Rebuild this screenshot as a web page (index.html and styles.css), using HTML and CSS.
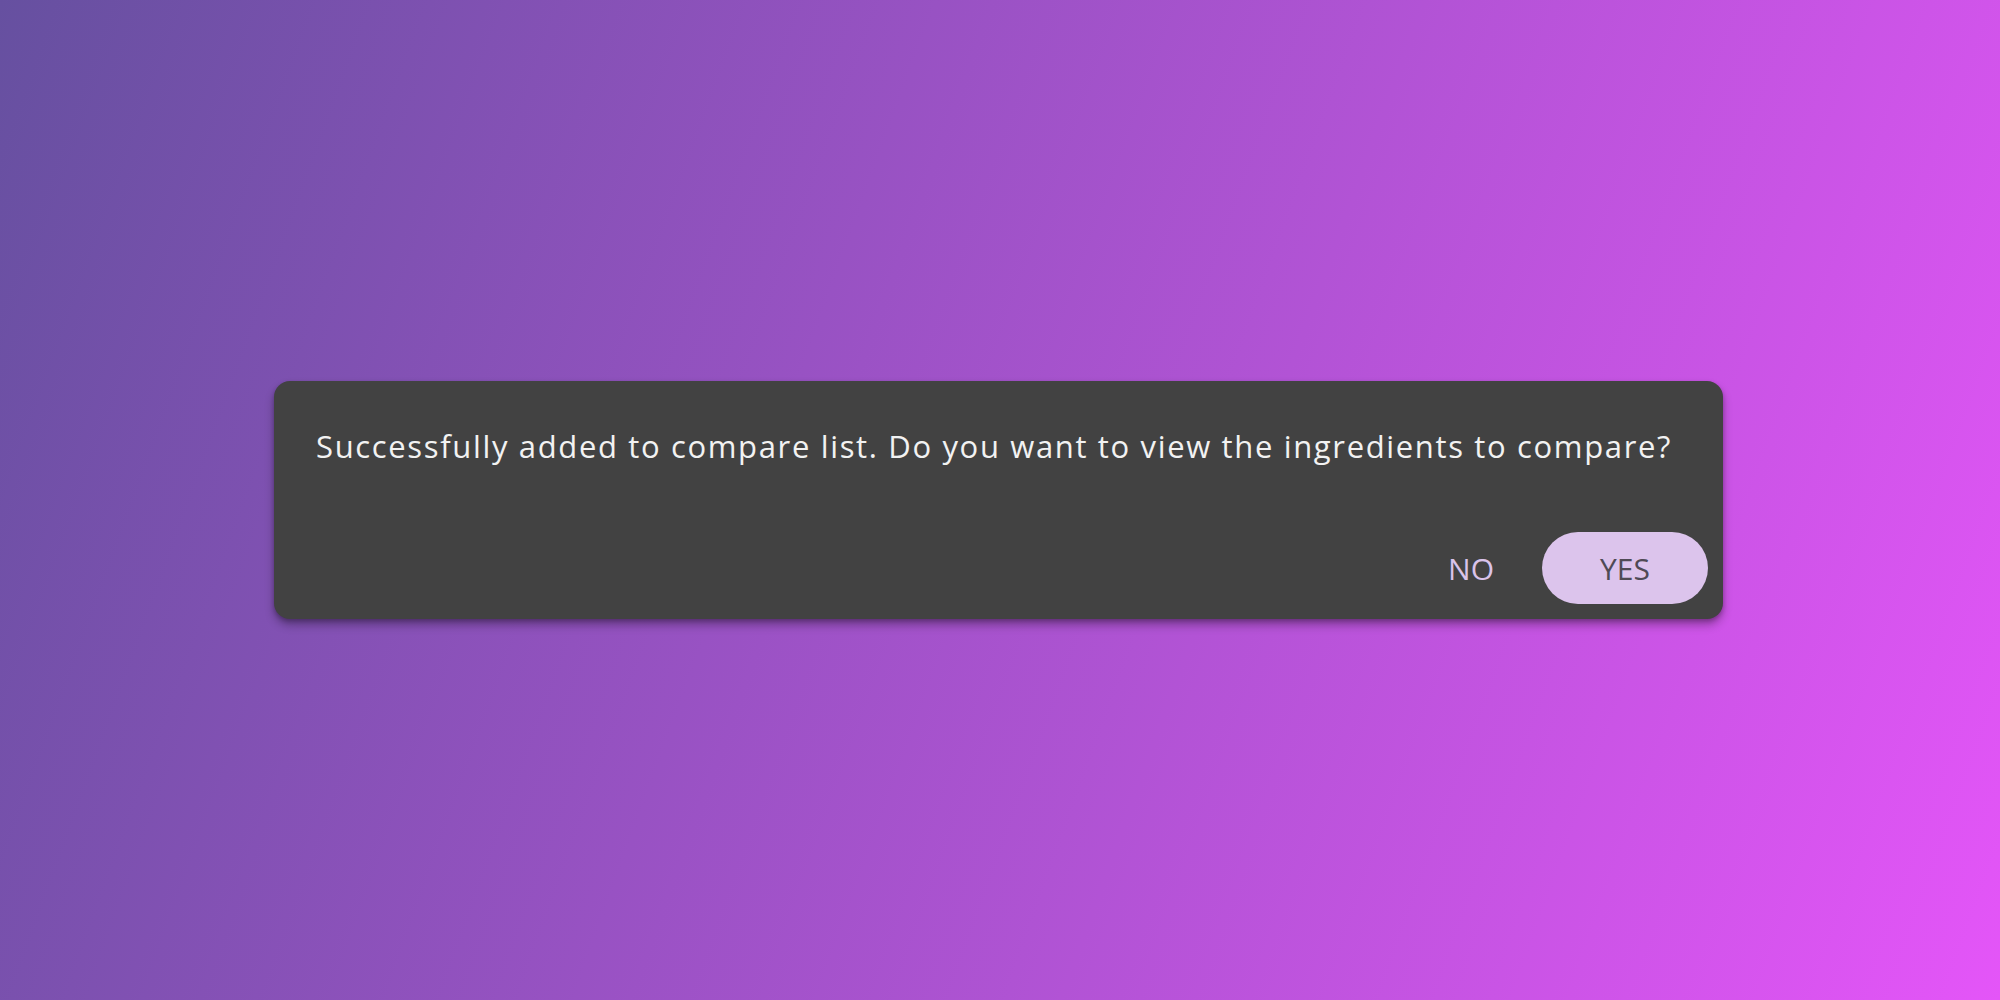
FILE: index.html
```html
<!DOCTYPE html>
<html lang="en">
<head>
<meta charset="utf-8">
<title>Snackbar</title>
<link rel="stylesheet" href="styles.css">
</head>
<body>
<main class="stage">
  <div class="snackbar">
    <p class="message">Successfully added to compare list. Do you want to view the ingredients to compare?</p>
    <div class="actions">
      <button class="btn btn-text">NO</button>
      <button class="btn btn-filled">YES</button>
    </div>
  </div>
</main>
</body>
</html>
```
FILE: styles.css
```css
html, body {
  margin: 0;
  padding: 0;
}
body {
  width: 2000px;
  height: 1000px;
  background: linear-gradient(110deg, #6650a0 0%, #e455f8 100%);
  font-family: "Open Sans", "Noto Sans", sans-serif;
}
.stage {
  height: 1000px;
  display: flex;
  align-items: center;
  justify-content: center;
}
.snackbar {
  width: 1449px;
  height: 238px;
  box-sizing: border-box;
  background: #424242;
  border-radius: 16px;
  box-shadow: 0 6px 10px rgba(0, 0, 0, 0.3), 0 2px 4px rgba(0, 0, 0, 0.2);
  padding: 0 15px 15px 42px;
  display: flex;
  flex-direction: column;
  justify-content: space-between;
  margin-left: -3px;
}
.message {
  margin: 45px 0 0;
  color: #f2f2f2;
  font-size: 31px;
  line-height: 40px;
  font-weight: 400;
  letter-spacing: 1.65px;
  white-space: nowrap;
}
.actions {
  display: flex;
  justify-content: flex-end;
  align-items: center;
  gap: 48px;
}
.btn {
  font-family: "Open Sans", "Noto Sans", sans-serif;
  font-size: 30px;
  border: none;
  background: none;
  cursor: pointer;
  padding: 0;
}
.btn-text {
  color: #d9c3ea;
}
.btn-filled {
  width: 166px;
  height: 72px;
  border-radius: 36px;
  background: #dcc4ec;
  color: #4f4a55;
}
```
